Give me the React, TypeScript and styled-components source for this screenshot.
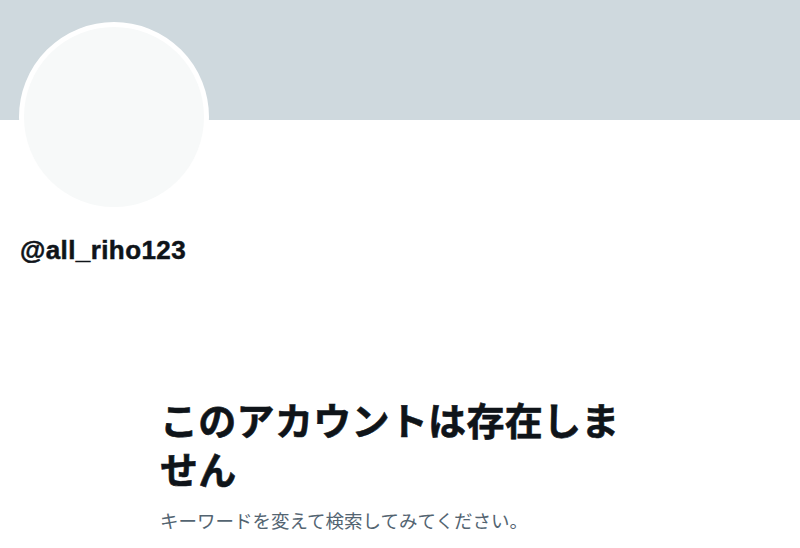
import { FC } from 'react';
import styled, { createGlobalStyle } from 'styled-components';

const GlobalStyle = createGlobalStyle`
  html, body {
    margin: 0;
    padding: 0;
    background: #ffffff;
  }
  body {
    font-family: "Liberation Sans", "Noto Sans CJK JP", sans-serif;
    color: #0f1419;
    overflow: hidden;
  }
`;

const Page = styled.main`
  display: flex;
  flex-direction: column;
  width: 800px;
  min-height: 548px;
`;

const Banner = styled.div`
  height: 120px;
  background-color: #cfd9de;
`;

const ProfileHeader = styled.section`
  display: flex;
  flex-direction: column;
  align-items: flex-start;
  padding: 0 20px 0 19px;
`;

const Avatar = styled.div`
  width: 180px;
  height: 180px;
  margin-top: -98px;
  border: 5px solid #ffffff;
  border-radius: 50%;
  background-color: #f7f9f9;
`;

const Username = styled.h2`
  margin: 22px 0 0 1px;
  font-family: "Liberation Sans", Arial, sans-serif;
  font-size: 26px;
  line-height: 32px;
  font-weight: 700;
  letter-spacing: 0.4px;
  -webkit-text-stroke: 0.5px #0f1419;
  color: #0f1419;
`;

const EmptyState = styled.section`
  display: flex;
  flex-direction: column;
  width: 480px;
  margin: 128px auto 0;
`;

const EmptyTitle = styled.h1`
  margin: 0;
  font-family: "Noto Sans CJK JP", sans-serif;
  font-size: 38px;
  line-height: 49px;
  font-weight: 700;
  letter-spacing: 0.3px;
  -webkit-text-stroke: 0.6px #0f1419;
  color: #0f1419;
`;

const EmptyText = styled.p`
  margin: 16px 0 0;
  font-family: "Noto Sans CJK JP", sans-serif;
  font-size: 18.5px;
  line-height: 24px;
  font-weight: 400;
  color: #536471;
`;

const App: FC = () => (
  <>
    <GlobalStyle />
    <Page>
      <Banner />
      <ProfileHeader>
        <Avatar />
        <Username>@all_riho123</Username>
      </ProfileHeader>
      <EmptyState>
        <EmptyTitle>このアカウントは存在しません</EmptyTitle>
        <EmptyText>キーワードを変えて検索してみてください。</EmptyText>
      </EmptyState>
    </Page>
  </>
);

export default App;
